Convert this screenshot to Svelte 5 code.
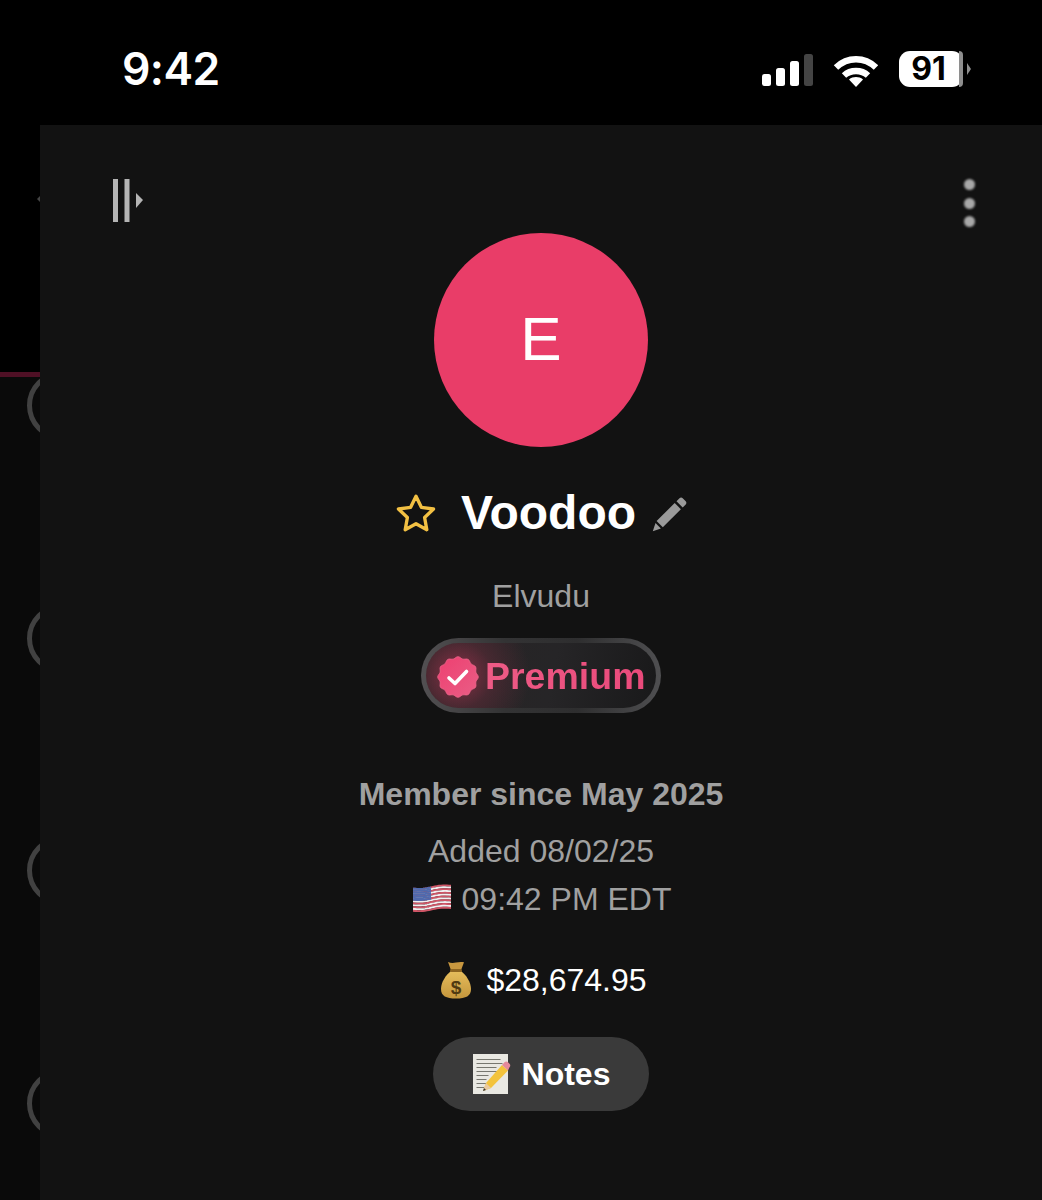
<script>
	const rows = [0, 1, 2, 3];

	// scalloped edge of the verified badge
	function scallop(cx, cy, r, bumps, depth) {
		const steps = bumps * 8;
		let d = '';
		for (let i = 0; i < steps; i++) {
			const a = (i / steps) * Math.PI * 2;
			const rr = r + depth * Math.cos(a * bumps);
			const x = (cx + rr * Math.cos(a)).toFixed(2);
			const y = (cy + rr * Math.sin(a)).toFixed(2);
			d += (i ? 'L' : 'M') + x + ' ' + y;
		}
		return d + 'Z';
	}
	const badge = scallop(21, 21, 19.4, 12, 0.9);

	// the flag leans up to the right and ripples a little
	const wave = (x) => 3.6 - x * 0.075 + Math.sin((x / 38) * Math.PI * 2) * 0.9;
	function ripple(x0, x1, y) {
		let d = '';
		for (let x = x0; x <= x1; x += 2) {
			d += (x === x0 ? 'M' : 'L') + x + ' ' + (y + wave(x)).toFixed(2);
		}
		return d;
	}
	const stripes = Array.from({ length: 13 }, (_, i) => ({
		d: ripple(0, 38, 1 + i * 1.85),
		color: i % 2 ? '#f2eef0' : '#cf5566'
	}));
	const canton = Array.from({ length: 7 }, (_, i) => ripple(0, 18, 1 + i * 1.85));

	const noteLines = [
		[5, 24], [9, 26], [13, 20], [17, 24], [21, 12], [25, 10], [29, 12], [33, 8]
	];
</script>

<div class="screen">
	<header class="status">
		<span class="time">9:42</span>
		<div class="indicators">
			<div class="cell">
				<i class="bar b1"></i>
				<i class="bar b2"></i>
				<i class="bar b3"></i>
				<i class="bar b4"></i>
			</div>
			<svg class="wifi" width="46" height="33" viewBox="0 0 46 33" fill="none" stroke="#fff" stroke-width="6.4">
				<path d="M3 13.500C14.500 2.500 31.500 2.500 43 13.500" />
				<path d="M11 21.500C17.500 15.500 28.500 15.500 35 21.500" />
				<path d="M23 33l-7-7.600c4-3.200 10-3.200 14 0z" fill="#fff" stroke="none" />
			</svg>
			<div class="battery">
				<span class="level">91</span>
				<i class="rest"></i>
			</div>
			<i class="tip"></i>
		</div>
	</header>

	<div class="body">
		<aside class="list">
			<div class="list-top"><i class="back"></i></div>
			<div class="progress"></div>
			<ul>
				{#each rows as row}
					<li data-row={row}><span class="ring"></span></li>
				{/each}
			</ul>
		</aside>

		<section class="panel">
			<div class="toolbar">
				<button class="tool" aria-label="Collapse">
					<svg width="32" height="46" viewBox="0 0 32 46" fill="#b4b4b4">
						<rect x="1" y="1" width="5" height="43" />
						<rect x="12.500" y="1" width="5" height="43" />
						<path d="M24 15l7 7-7 8z" />
					</svg>
				</button>
				<button class="tool dots" aria-label="More">
					<i></i><i></i><i></i>
				</button>
			</div>

			<div class="avatar">E</div>

			<div class="name-row">
				<svg class="star" width="42" height="40" viewBox="0 0 40 38" fill="none" stroke="#f2c043" stroke-width="3.200" stroke-linejoin="round">
					<path d="M20 3l5.100 10.600 11.600 1.600-8.500 8.100 2.100 11.600L20 29.300l-10.300 5.600 2.100-11.600-8.500-8.100 11.600-1.600z" />
				</svg>
				<h1>Voodoo</h1>
				<svg class="pencil" width="35" height="35" viewBox="0 0 35 35" fill="#9a9a9a">
					<path d="M27.500 1.200c.9-.9 2.300-.9 3.200 0l3 3c.9.9.9 2.300 0 3.200l-3 3-6.200-6.200z" />
					<path d="M22.700 6l6.200 6.200L10.800 30.300 4.600 24.100z" />
					<path d="M3.500 26l5.400 5.400L.8 34.200z" />
				</svg>
			</div>

			<p class="username">Elvudu</p>

			<div class="premium">
				<svg class="seal" width="42" height="42" viewBox="0 0 42 42">
					<defs>
						<linearGradient id="sealFill" x1="0" y1="0" x2="1" y2="1">
							<stop offset="0" stop-color="#ee3f70" />
							<stop offset="1" stop-color="#e95e86" />
						</linearGradient>
					</defs>
					<path d={badge} fill="url(#sealFill)" stroke="#f0668c" stroke-width="0.800" />
					<path d="M12 22l6 5.500 11.500-12" fill="none" stroke="#fff" stroke-width="3.600" stroke-linecap="round" stroke-linejoin="round" />
				</svg>
				<span>Premium</span>
			</div>

			<p class="since">Member since May 2025</p>
			<p class="muted added">Added 08/02/25</p>
			<p class="muted local">
				<svg class="flag" width="38" height="30" viewBox="0 0 38 30" fill="none">
					{#each stripes as s}
						<path d={s.d} stroke={s.color} stroke-width="1.950" />
					{/each}
					{#each canton as d}
						<path {d} stroke="#4f69ad" stroke-width="1.950" />
					{/each}
				</svg>
				<span>09:42 PM EDT</span>
			</p>

			<p class="balance">
				<svg class="bag" width="30" height="38" viewBox="0 0 30 38">
					<defs>
						<linearGradient id="bagFill" x1="0" y1="0" x2="0" y2="1">
							<stop offset="0" stop-color="#e6bd5c" />
							<stop offset="1" stop-color="#c4963c" />
						</linearGradient>
					</defs>
					<path d="M7 1c2.500 1.200 5 1.400 8 .6 3-.8 5.500-.8 8-.4l-3 8h-10z" fill="#c8973f" />
					<path d="M10 10h10c5 4 10 11 10 18 0 7-5 9.500-15 9.500S0 35 0 28c0-7 5-14 10-18z" fill="url(#bagFill)" />
					<rect x="9" y="8" width="12" height="3" rx="1.500" fill="#8d6420" />
					<text x="15" y="33" text-anchor="middle" class="bag-sign">$</text>
				</svg>
				<span>$28,674.95</span>
			</p>

			<button class="notes">
				<svg class="memo" width="38" height="40" viewBox="0 0 38 40">
					<rect x="0" y="0" width="35" height="40" fill="#e9e8e2" />
					{#each noteLines as [y, w]}
						<rect x="3.500" {y} width={w} height="1" fill="#77776f" />
					{/each}
					<path d="M10 37l3-8L29 11l6 5.500L18 34z" fill="#f3c33b" />
					<path d="M10 37l3-8 5 5z" fill="#e9c9a0" />
					<path d="M10 37l1-3 2 2z" fill="#333" />
					<path d="M29 11l2.500-2.700c1-1 2.500-1 3.500 0l1.500 1.500c1 1 1 2.400 0 3.400L35 16.500z" fill="#e58a9b" />
				</svg>
				<span>Notes</span>
			</button>
		</section>
	</div>
</div>

<style>
	:global(body) {
		margin: 0;
		background: #000;
	}

	.screen {
		width: 1042px;
		height: 1200px;
		overflow: hidden;
		background: #000;
		font-family: 'Liberation Sans', Arial, sans-serif;
		display: flex;
		flex-direction: column;
	}

	.status {
		height: 125px;
		flex: none;
		display: flex;
		justify-content: space-between;
		align-items: flex-start;
		padding: 0 71px 0 122px;
		box-sizing: border-box;
	}

	.time {
		margin-top: 41px;
		font-family: Inter, sans-serif;
		font-weight: 600;
		font-size: 44.500px;
		line-height: 56px;
		letter-spacing: -0.6px;
		color: #fff;
	}

	.indicators {
		margin-top: 51px;
		display: flex;
		align-items: center;
		height: 36px;
	}

	.cell {
		display: flex;
		align-items: flex-end;
		gap: 5px;
		height: 32px;
		margin-top: 2px;
		margin-right: 20px;
	}

	.bar {
		display: block;
		width: 9px;
		border-radius: 2.500px;
		background: #fff;
	}
	.b1 { height: 12px; }
	.b2 { height: 18px; }
	.b3 { height: 25px; }
	.b4 { height: 32px; background: #444; }

	.wifi {
		margin-top: 2px;
		margin-right: 20px;
	}

	.battery {
		position: relative;
		width: 64px;
		height: 36px;
		border-radius: 11px;
		background: #fff;
		display: flex;
		align-items: center;
		justify-content: center;
	}

	.level {
		font-family: Inter, 'Liberation Sans', sans-serif;
		font-weight: 700;
		font-size: 32px;
		line-height: 36px;
		color: #000;
		margin-right: 5px;
	}

	.rest {
		position: absolute;
		top: 0;
		right: 0;
		width: 4px;
		height: 100%;
		border-radius: 0 11px 11px 0;
		background: #8e8e8e;
	}

	.tip {
		width: 0;
		height: 0;
		margin-left: 4px;
		border-left: 4px solid #8e8e8e;
		border-top: 6px solid transparent;
		border-bottom: 6px solid transparent;
	}

	.body {
		flex: 1;
		min-height: 0;
		display: flex;
	}

	.list {
		width: 40px;
		flex: none;
		overflow: hidden;
		background: #0a0a0a;
	}

	.list-top {
		height: 247px;
		background: #000;
		display: flex;
		align-items: flex-start;
		justify-content: flex-end;
	}

	.back {
		margin-top: 71px;
		border-right: 3px solid #444;
		border-top: 3px solid transparent;
		border-bottom: 3px solid transparent;
	}

	.progress {
		height: 5px;
		background: #4f1025;
	}

	.list ul {
		list-style: none;
		margin: 0;
		padding: 0;
	}

	.list li {
		height: 232.700px;
		display: flex;
		align-items: center;
		padding-left: 27px;
		box-sizing: border-box;
	}

	.list li:first-child {
		margin-top: -88px;
	}

	.ring {
		flex: none;
		width: 69px;
		height: 69px;
		box-sizing: border-box;
		border: 5px solid #414141;
		border-radius: 50%;
	}

	.panel {
		flex: 1;
		min-width: 0;
		background: #121212;
		display: flex;
		flex-direction: column;
		align-items: center;
	}

	.toolbar {
		align-self: stretch;
		height: 108px;
		box-sizing: border-box;
		padding: 53px 67px 0 72px;
		display: flex;
		justify-content: space-between;
		align-items: flex-start;
	}

	.tool {
		padding: 0;
		border: 0;
		background: none;
		display: block;
		line-height: 0;
	}

	.dots {
		display: flex;
		flex-direction: column;
		gap: 7.500px;
		margin-top: 1px;
	}

	.dots i {
		display: block;
		width: 11px;
		height: 11px;
		border-radius: 50%;
		background: #a8a8a8;
		filter: blur(1px);
	}

	.avatar {
		width: 214px;
		height: 214px;
		flex: none;
		box-sizing: border-box;
		padding-bottom: 4px;
		border-radius: 50%;
		background: #e93d68;
		color: #fff;
		font-size: 62px;
		display: flex;
		align-items: center;
		justify-content: center;
	}

	.name-row {
		margin-top: 36px;
		height: 60px;
		display: flex;
		align-items: center;
	}

	.star {
		margin-right: 24px;
	}

	h1 {
		margin: 0;
		font-size: 48px;
		font-weight: 700;
		line-height: 60px;
		color: #fff;
	}

	.pencil {
		margin-left: 16px;
		margin-top: 3px;
	}

	p {
		margin: 0;
	}

	.username {
		margin-top: 33px;
		font-size: 32px;
		line-height: 40px;
		color: #a0a0a0;
	}

	.premium {
		margin-top: 22px;
		width: 240px;
		height: 75px;
		box-sizing: border-box;
		border: 5px solid transparent;
		border-radius: 38px;
		background:
			radial-gradient(circle at 32px 32px, rgba(233, 61, 104, 0.5) 0, rgba(233, 61, 104, 0.16) 34px, rgba(233, 61, 104, 0) 72px) padding-box,
			linear-gradient(100deg, #282425, #262527 55%, #19191a) padding-box,
			linear-gradient(90deg, #525052, #333334 35%, #2e2e2f 65%, #4f4f51) border-box;
		display: flex;
		align-items: center;
		padding-left: 11px;
		padding-top: 2px;
		font-size: 37.500px;
		font-weight: 700;
	}

	.premium span {
		margin-left: 6px;
		background: linear-gradient(90deg, #ee5b86, #ea4a7b);
		-webkit-background-clip: text;
		background-clip: text;
		color: transparent;
	}

	.seal {
		flex: none;
	}

	.since {
		margin-top: 61px;
		font-size: 32px;
		font-weight: 700;
		line-height: 40px;
		color: #a0a0a0;
	}

	.muted {
		font-size: 32px;
		line-height: 40px;
		color: #a0a0a0;
	}

	.added {
		margin-top: 17px;
	}

	.local {
		margin-top: 8px;
		margin-left: 2px;
		display: flex;
		align-items: center;
		gap: 11px;
	}

	.balance {
		margin-top: 41px;
		margin-left: 6px;
		display: flex;
		align-items: center;
		gap: 15px;
		font-size: 32px;
		line-height: 40px;
		color: #fff;
	}

	.bag-sign {
		font-family: 'Liberation Sans', sans-serif;
		font-size: 19px;
		font-weight: 700;
		fill: #4f3a12;
	}

	.notes {
		margin-top: 37px;
		width: 216px;
		height: 74px;
		border: 0;
		border-radius: 37px;
		background: #3a3a3a;
		color: #fff;
		font-family: inherit;
		font-size: 32px;
		font-weight: 700;
		display: flex;
		align-items: center;
		justify-content: center;
		gap: 11px;
		padding: 0 0 0 1px;
	}
</style>
